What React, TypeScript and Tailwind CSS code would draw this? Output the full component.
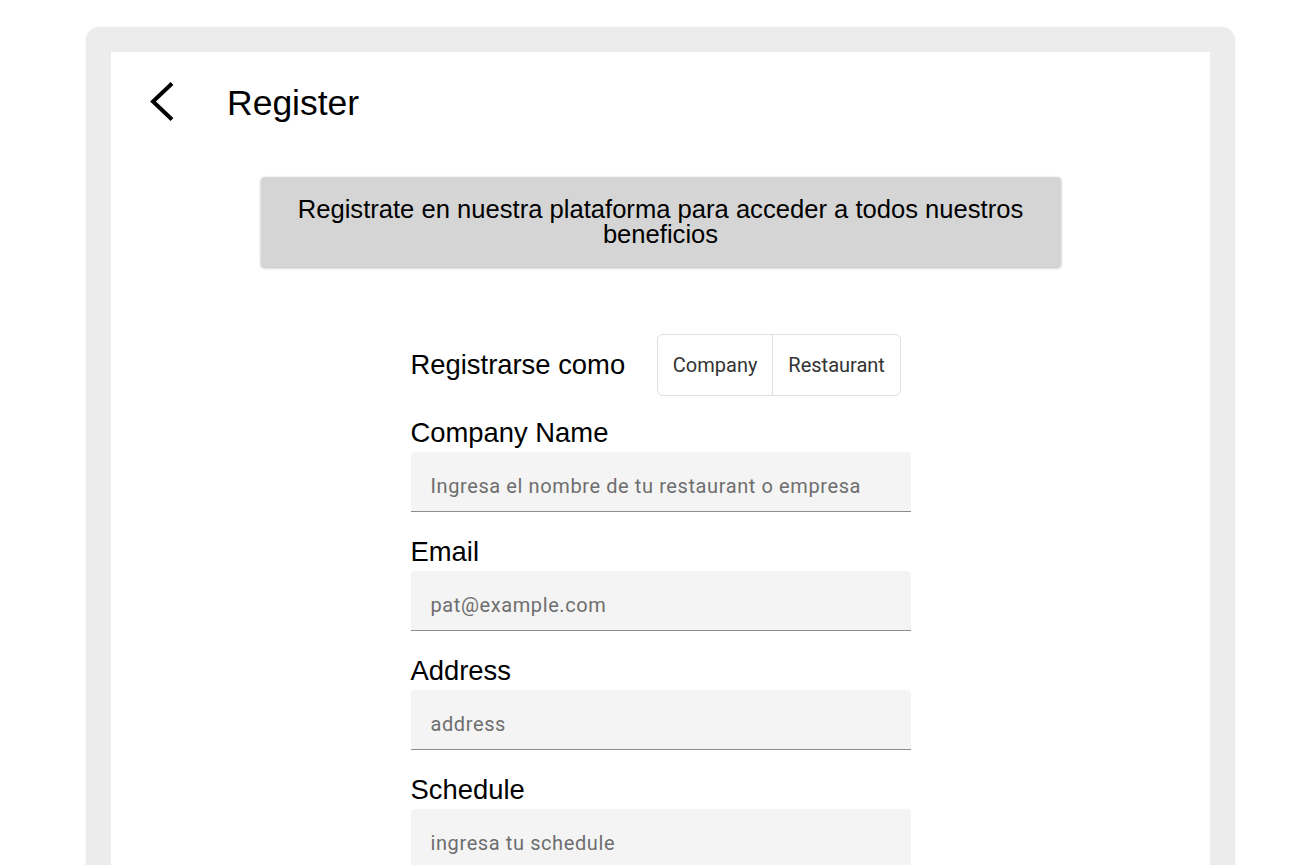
const fields = [
  { label: 'Company Name', placeholder: 'Ingresa el nombre de tu restaurant o empresa' },
  { label: 'Email', placeholder: 'pat@example.com' },
  { label: 'Address', placeholder: 'address' },
  { label: 'Schedule', placeholder: 'ingresa tu schedule' },
];

function BackIcon() {
  return (
    <svg width="30" height="40" viewBox="0 0 30 40" fill="none">
      <polyline
        points="23,1.5 4,19.5 23,37.5"
        stroke="#000"
        strokeWidth="4"
        strokeLinecap="butt"
        strokeLinejoin="miter"
      />
    </svg>
  );
}

export default function App() {
  return (
    <div className="min-h-[865px] bg-white font-['Liberation_Sans',Arial,sans-serif] text-black">
      <div className="ml-[86px] mt-[27px] w-[1149px] rounded-[14px] bg-[#ececec] px-[25px] pt-[25px] shadow-[0_0_2px_rgba(0,0,0,0.08)]">
        <div className="min-h-[900px] bg-white">
          {/* header */}
          <div className="flex h-[100px] items-center pl-[38px]">
            <button className="flex h-[40px] w-[30px] items-center justify-center">
              <BackIcon />
            </button>
            <h1 className="ml-[48px] pt-[3px] text-[35.5px] leading-none">Register</h1>
          </div>

          <div className="mx-auto mt-[25px] flex h-[90px] w-[800px] items-center justify-center rounded-[4px] bg-[#d5d5d5] px-4 text-center text-[25.6px] leading-[25px] shadow-[0_1px_3px_rgba(0,0,0,0.3)]">
            Registrate en nuestra plataforma para acceder a todos nuestros beneficios
          </div>

          <div className="mx-auto mt-[67px] w-[500px]">
            <div className="flex items-center">
              <span className="text-[27.4px] leading-[30px]">Registrarse como</span>
              <div className="ml-[32px] flex h-[62px] overflow-hidden rounded-[6px] border border-[#dedede] font-['Roboto',sans-serif] text-[20px] text-[#333]">
                <button className="w-[115px] border-r border-[#dedede]">Company</button>
                <button className="w-[127px]">Restaurant</button>
              </div>
            </div>

            <div className="mt-[22px] flex flex-col">
              {fields.map((f, i) => (
                <label key={f.label} className={i === 0 ? 'block' : 'mt-[25px] block'}>
                  <span className="mb-[4px] block text-[27.4px] leading-[30px]">{f.label}</span>
                  <input
                    placeholder={f.placeholder}
                    className="block h-[60px] w-full rounded-t-[4px] border-b border-[#8c8c8c] bg-[#f4f4f4] pt-[22px] pb-[14px] pl-[20px] font-['Roboto',sans-serif] text-[20px] leading-[23px] tracking-[0.6px] outline-none placeholder:text-[#6e6e6e]"
                  />
                </label>
              ))}
            </div>
          </div>
        </div>
      </div>
    </div>
  );
}
